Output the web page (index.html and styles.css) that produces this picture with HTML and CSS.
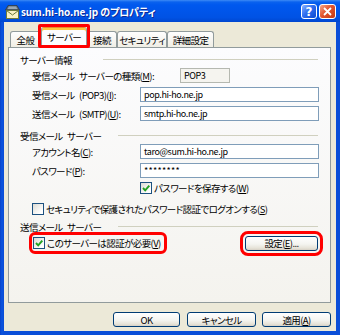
FILE: index.html
```html
<!DOCTYPE html>
<html>
<head>
  <meta charset="UTF-8" />
  <title>sum.hi-ho.ne.jp のプロパティ</title>
  <link rel="stylesheet" href="styles.css">
</head>
<body>
  <div class="window">
    <div class="titlebar">
      <svg class="app-icon" viewBox="0 0 15 14" width="15" height="14">
        <polygon points="3,0.5 12,0.5 14.5,5 0.5,5" fill="#5E6C7A" stroke="#2F3A45" stroke-width="0.8" />
        <polygon points="4,1.5 11,1.5 12.5,4 2.5,4" fill="#9AA7B3" />
        <rect x="1.5" y="5.5" width="12" height="8" fill="#F7F1C4" stroke="#6E7A3A" />
        <polyline points="1.5,5.5 7.5,10 13.5,5.5" fill="none" stroke="#6E7A3A" />
      </svg>
      <span class="title">sum.hi-ho.ne.jp のプロパティ</span>
      <button class="cap help">?</button>
      <button class="cap close">
        <svg viewBox="0 0 9 9" width="9" height="9">
          <path d="M1 1 L8 8 M8 1 L1 8" stroke="#fff" stroke-width="1.8" />
        </svg>
      </button>
    </div>

    <div class="client">
      <div class="tabs">
        <div class="tab t-general">全般</div>
        <div class="tab t-server active">サーバー</div>
        <div class="tab t-conn">接続</div>
        <div class="tab t-sec">セキュリティ</div>
        <div class="tab t-adv">詳細設定</div>
      </div>

      <div class="panel">
        <div class="group"><span>サーバー情報</span><i class="rule wide"></i></div>
        <div class="row">
          <label class="lbl lbl-long">受信メール サーバーの種類(<u>M</u>):</label>
          <span class="field ro">POP3</span>
        </div>
        <div class="row">
          <label class="lbl">受信メール (POP3)(<u>I</u>):</label>
          <span class="field">pop.hi-ho.ne.jp</span>
        </div>
        <div class="row">
          <label class="lbl">送信メール (SMTP)(<u>U</u>):</label>
          <span class="field">smtp.hi-ho.ne.jp</span>
        </div>

        <div class="group g2"><span>受信メール サーバー</span><i class="rule"></i></div>
        <div class="row">
          <label class="lbl">アカウント名(<u>C</u>):</label>
          <span class="field">taro@sum.hi-ho.ne.jp</span>
        </div>
        <div class="row">
          <label class="lbl">パスワード(<u>P</u>):</label>
          <span class="field pwd">********</span>
        </div>
        <div class="crow save">
          <span class="check on"><svg viewBox="0 0 10 10" width="10" height="10"><path d="M2 5 L4.2 7.4 L8.3 2.6" fill="none" stroke="#21A121" stroke-width="1.9" /></svg></span>
          <span>パスワードを保存する(<u>W</u>)</span>
        </div>
        <div class="crow spa">
          <span class="check"></span>
          <span>セキュリティで保護されたパスワード認証でログオンする(<u>S</u>)</span>
        </div>

        <div class="group g3"><span>送信メール サーバー</span><i class="rule"></i></div>
        <div class="crow auth">
          <span class="mark">
            <span class="check on"><svg viewBox="0 0 10 10" width="10" height="10"><path d="M2 5 L4.2 7.4 L8.3 2.6" fill="none" stroke="#21A121" stroke-width="1.9" /></svg></span>
            <span class="focus">このサーバーは認証が必要(<u>V</u>)</span>
          </span>
          <button class="btn settings">設定(<u>E</u>)...</button>
        </div>
      </div>

      <div class="actions">
        <button class="btn ok">OK</button>
        <button class="btn">キャンセル</button>
        <button class="btn">適用(<u>A</u>)</button>
      </div>
    </div>
  </div>
</body>
</html>
```

FILE: styles.css
```css
* {
  box-sizing: border-box;
}

body {
  margin: 0;
  font-family: "Noto Sans CJK JP", "Noto Sans", sans-serif;
  font-size: 9.5px;
  letter-spacing: -0.6px;
  word-spacing: 3px;
  font-feature-settings: "palt";
  color: #000;
  white-space: nowrap;
}

u { text-decoration: underline; text-underline-offset: 1px }

.window {
  width: 340px;
  height: 335px;
  display: flex;
  flex-direction: column;
  background: linear-gradient(90deg, #0842C8, #0A55E0 2px, #0A4ED8 3px);
}

.titlebar {
  height: 22px;
  display: flex;
  align-items: center;
  padding: 1px 4px 0 5px;
  color: #fff;
  background: linear-gradient(#3D8BF5 0, #0A62EE 2px, #0058EE 5px, #0055EA 50%, #0052E4 80%, #0046CF 100%);
}

.app-icon { flex: none }

.title {
  flex: 1;
  margin-left: 1px;
  font-size: 10px;
  font-weight: bold;
  letter-spacing: -0.1px;
  word-spacing: 0;
  text-shadow: 1px 1px #0C2A96;
}

.cap {
  width: 16px;
  height: 15px;
  padding: 0;
  border: 1px solid #fff;
  border-radius: 3px;
  display: flex;
  align-items: center;
  justify-content: center;
}

.help {
  color: #fff;
  font: bold 12px "DejaVu Sans", sans-serif;
  background: linear-gradient(135deg, #8CB4FF, #2F6EF0 45%, #0C48D0);
}

.close {
  width: 17px;
  margin-left: 2px;
  background: linear-gradient(135deg, #F6A88A, #E2552E 45%, #C13A14);
}

.client {
  flex: 1;
  margin: 0 4px 4px;
  padding: 5px 5px 0 4px;
  background: #ECE9D8;
  display: flex;
  flex-direction: column;
}

/* tabs */
.tabs {
  height: 20px;
  margin-left: 2px;
  display: flex;
  align-items: flex-end;
  position: relative;
  z-index: 1;
}

.tab {
  height: 16px;
  border: 1px solid #919B9C;
  border-bottom: 0;
  border-radius: 3px 3px 0 0;
  background: linear-gradient(#FEFEFE, #F0EEE5);
  display: flex;
  align-items: center;
  justify-content: center;
  padding-top: 1px;
}

.t-general { width: 31px }
.t-server { width: 46px }
.t-conn { width: 30px }
.t-sec { width: 50px }
.t-adv { width: 47px }

.tab.active {
  height: 21px;
  margin-bottom: -1px;
  padding-top: 0;
  padding-bottom: 2px;
  border-top-color: #E68B2C;
  background: #FCFCFE;
  box-shadow: inset 0 2px #FFC73C;
  position: relative;
}

.tab.active::after {
  content: '';
  position: absolute;
  left: -4px;
  right: -4px;
  top: -4px;
  bottom: 0;
  border: 3px solid #F00;
  border-radius: 2px;
}

/* panel */
.panel {
  height: 256px;
  border: 1px solid #919B9C;
  background: linear-gradient(#FCFCFE, #F4F3EE);
  padding: 5px 11px 0 11px;
}

.group {
  height: 13px;
  display: flex;
  align-items: center;
}

.rule {
  margin-left: auto;
  margin-right: 1px;
  width: 200px;
  border-top: 1px solid #D0D0BF;
}

.rule.wide { width: 215px }
.g2 { margin-top: 6px }
.g3 { margin-top: 4px }

.row {
  height: 19px;
  padding-left: 12px;
  display: flex;
  align-items: center;
}

.lbl { width: 108px; flex: none }
.lbl-long { width: 148px }

.field {
  flex: 1;
  height: 15px;
  padding: 0 3px;
  font-size: 9px;
  letter-spacing: -0.4px;
  border: 1px solid #7F9DB9;
  background: #fff;
  display: flex;
  align-items: center;
}

.field.ro {
  flex: none;
  width: 50px;
  border-color: #B5B8B0;
  background: #F5F4EF;
}

.field.pwd { letter-spacing: 0.3px }

.crow {
  height: 15px;
  display: flex;
  align-items: center;
}

.crow.save { padding-left: 120px }
.crow.spa { margin-top: 6px; padding-left: 12px }

.check {
  width: 12px;
  height: 12px;
  margin-right: 2px;
  border: 1px solid #1C5180;
  background: linear-gradient(135deg, #DCDBD4, #FFFFFF 80%);
  display: flex;
  align-items: center;
  justify-content: center;
  flex: none;
}

.crow.auth {
  height: 16px;
  margin-top: 2px;
  padding: 0 1px 0 13px;
  justify-content: space-between;
}

.mark {
  display: flex;
  align-items: center;
  padding-right: 2px;
  outline: 3px solid #F00;
  outline-offset: 1px;
  border-radius: 2px;
}

/* buttons */
.btn {
  width: 69px;
  height: 15px;
  padding: 0;
  font: inherit;
  letter-spacing: inherit;
  color: #000;
  border: 1px solid #003C74;
  border-radius: 3px;
  background: linear-gradient(#FFFFFF, #F4F4F0 55%, #E6E3D8 85%, #D6D0C5);
  display: flex;
  align-items: center;
  justify-content: center;
}

.btn.settings {
  width: 73px;
  outline: 3px solid #F00;
  outline-offset: 2px;
  border-radius: 3px;
}

.btn.ok { width: 67px }

.actions {
  margin-top: 9px;
  display: flex;
  justify-content: flex-end;
  gap: 7px;
}

.actions .btn + .btn + .btn { margin-left: -1px }
```
